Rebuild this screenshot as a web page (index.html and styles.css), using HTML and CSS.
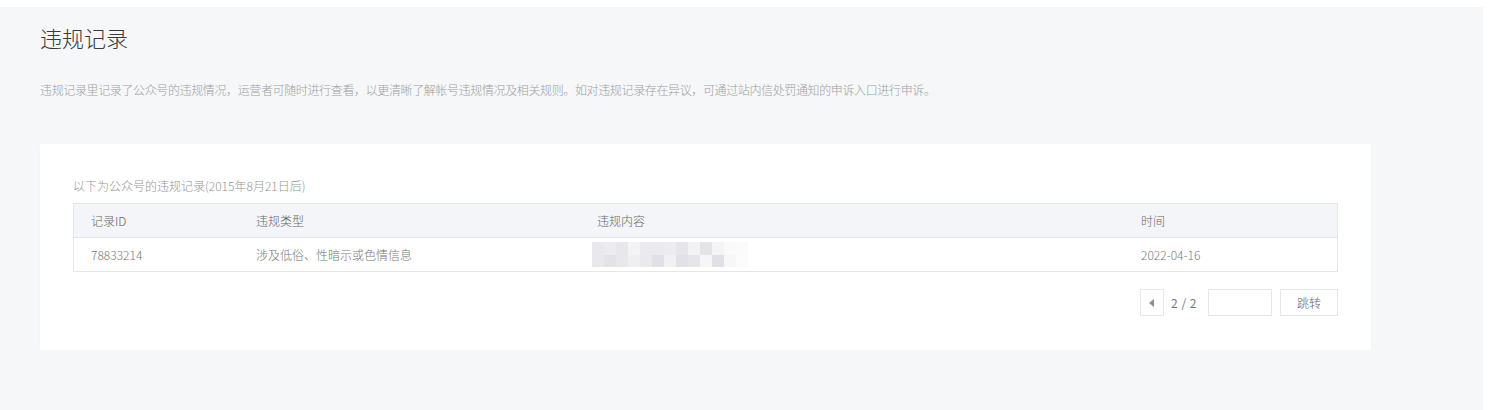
FILE: index.html
```html
<!DOCTYPE html>
<html lang="zh-CN">
<head>
<meta charset="utf-8">
<title>违规记录</title>
<link rel="stylesheet" href="styles.css">
</head>
<body>
<div class="panel">
  <h1 class="title">违规记录</h1>
  <p class="desc">违规记录里记录了公众号的违规情况，运营者可随时进行查看，以更清晰了解帐号违规情况及相关规则。如对违规记录存在异议，可通过站内信处罚通知的申诉入口进行申诉。</p>
  <div class="card">
    <div class="caption">以下为公众号的违规记录(2015年8月21日后)</div>
    <div class="table">
      <div class="row head">
        <div class="cell">记录ID</div>
        <div class="cell">违规类型</div>
        <div class="cell">违规内容</div>
        <div class="cell">时间</div>
      </div>
      <div class="row body">
        <div class="cell">78833214</div>
        <div class="cell">涉及低俗、性暗示或色情信息</div>
        <div class="cell content">
          <div class="mosaic">
            <span style="background:#e9e9ed"></span><span style="background:#ececf0"></span><span style="background:#e8e8ec"></span><span style="background:#f3f3f5"></span><span style="background:#ebebef"></span><span style="background:#ebebef"></span><span style="background:#ededf1"></span><span style="background:#e6e6ea"></span><span style="background:#f2f2f4"></span><span style="background:#e3e3e8"></span><span style="background:#f4f4f6"></span><span style="background:#fafafb"></span><span style="background:#fbfbfc"></span>
            <span style="background:#e9e9ec"></span><span style="background:#e2e2e7"></span><span style="background:#e8e8eb"></span><span style="background:#efeff1"></span><span style="background:#eaeaec"></span><span style="background:#e0e0e6"></span><span style="background:#f1f1f3"></span><span style="background:#e1e1e7"></span><span style="background:#e6e6ea"></span><span style="background:#f6f6f7"></span><span style="background:#e0e0e6"></span><span style="background:#f7f7f8"></span><span style="background:#fcfcfc"></span>
          </div>
        </div>
        <div class="cell">2022-04-16</div>
      </div>
    </div>
    <div class="pager">
      <button class="prev" type="button"><svg width="6" height="8" viewBox="0 0 6 8"><path d="M5 0 L5 8 L0 4 Z" fill="#8d8d8d"/></svg></button>
      <span class="count">2 / 2</span>
      <input class="jump-input" type="text">
      <button class="jump" type="button">跳转</button>
    </div>
  </div>
</div>
</body>
</html>
```
FILE: styles.css
```css
* { box-sizing: border-box; }
html, body {
  margin: 0;
  padding: 0;
  background: #ffffff;
  font-family: "Noto Sans CJK SC", "Liberation Sans", sans-serif;
}
.panel {
  margin-top: 7px;
  width: 1483px;
  height: 403px;
  background: #f6f7f9;
  padding: 16px 0 0 40px;
}
.title {
  margin: 0;
  font-size: 22px;
  line-height: 28px;
  font-weight: 300;
  color: #3a3a3a;
}
.desc {
  margin: 30px 0 0 0;
  font-size: 12px;
  line-height: 18px;
  color: #a0a0a0;
  letter-spacing: -0.37px;
  font-weight: 300;
}
.card {
  margin-top: 45px;
  width: 1331px;
  height: 206px;
  background: #ffffff;
  padding: 33px 33px 0 33px;
  box-shadow: 0 0 2px rgba(0, 0, 0, 0.03);
}
.caption {
  font-size: 12px;
  line-height: 18px;
  color: #959595;
  margin-bottom: 8px;
  font-weight: 300;
}
.table {
  border: 1px solid #e4e6eb;
  border-bottom: none;
}
.row {
  display: grid;
  grid-template-columns: 165px 341px 544px 1fr;
  height: 34px;
  align-items: center;
  border-bottom: 1px solid #e4e6eb;
  font-size: 12px;
  line-height: 18px;
  font-weight: 300;
}
.row.head {
  background: #f4f5f9;
  color: #666666;
}
.row.body {
  color: #777777;
}
.cell {
  padding-left: 17px;
  white-space: nowrap;
}
.cell.content {
  padding-left: 12px;
}
.mosaic {
  display: grid;
  grid-template-columns: repeat(13, 12px);
  grid-auto-rows: 12.5px;
  width: 156px;
  filter: blur(0.6px);
}
.mosaic span { display: block; }
.pager {
  display: flex;
  justify-content: flex-end;
  align-items: center;
  margin-top: 17px;
  height: 27px;
}
.prev {
  width: 24px;
  height: 27px;
  border: 1px solid #e4e6eb;
  background: #ffffff;
  padding: 0;
  display: flex;
  align-items: center;
  justify-content: center;
}
.count {
  margin: 0 11px 0 7px;
  font-size: 12px;
  color: #777777;
  letter-spacing: 0.5px;
}
.jump-input {
  width: 64px;
  height: 27px;
  border: 1px solid #e4e6eb;
  background: #ffffff;
  padding: 0;
  outline: none;
}
.jump {
  margin-left: 8px;
  width: 58px;
  height: 27px;
  border: 1px solid #e4e6eb;
  background: #ffffff;
  padding: 0;
  font-family: inherit;
  font-size: 12px;
  font-weight: 300;
  color: #666666;
}
```
